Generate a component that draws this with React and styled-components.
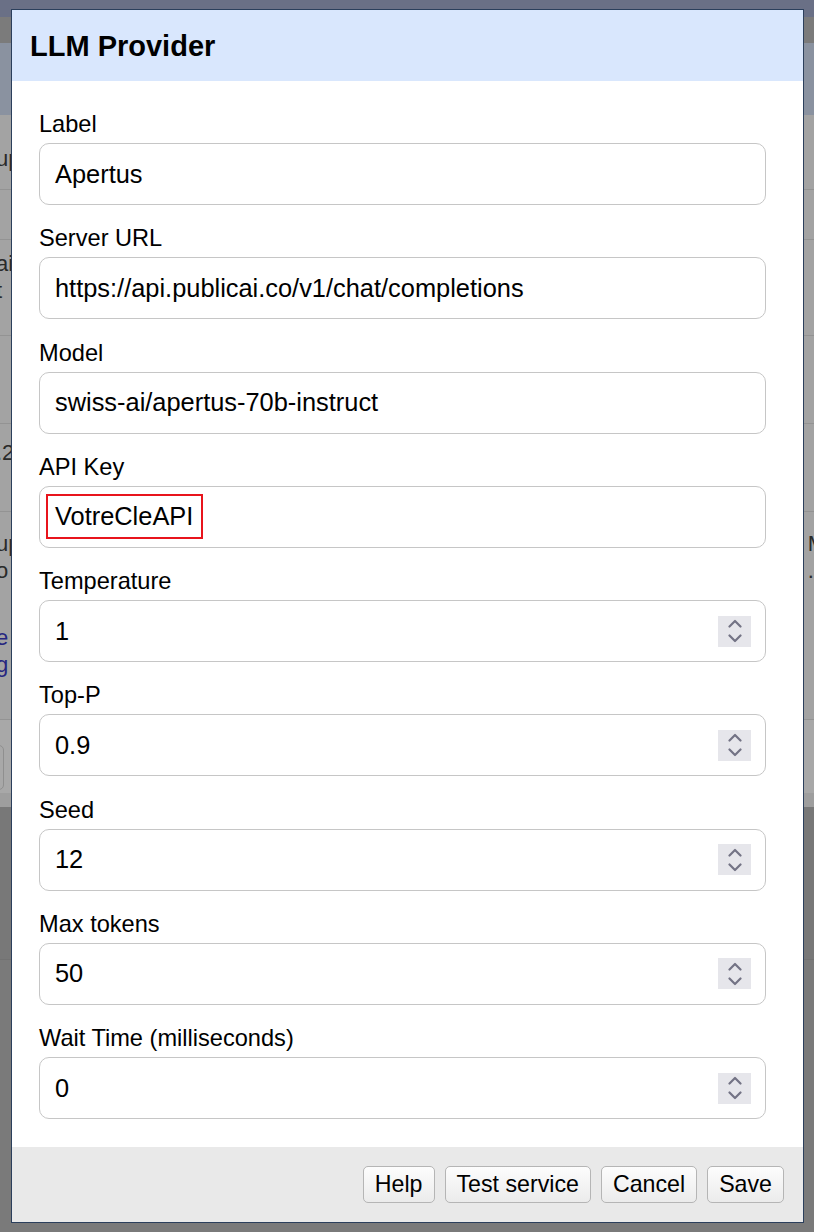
import React from "react";
import styled, { createGlobalStyle } from "styled-components";

const GlobalStyle = createGlobalStyle`
  html, body {
    margin: 0;
    padding: 0;
    background: #7a7a7a;
    font-family: "Liberation Sans", Arial, Helvetica, sans-serif;
    overflow: hidden;
  }
  * { box-sizing: border-box; }
`;

/* ---------- dimmed page behind the modal ---------- */
const Page = styled.div`
  width: 814px;
  height: 1232px;
  display: flex;
  flex-direction: column;
  background: #7a7a7a;
  overflow: hidden;
`;

const TopBar = styled.div`
  height: 17px;
  background: #6a7086;
`;

const TabBar = styled.div`
  height: 26px;
  background: #7b7b7b;
`;

const TableHead = styled.div`
  height: 72px;
  background: #8a92a0;
  display: flex;
  align-items: center;
  font-size: 30px;
  font-weight: bold;
  color: #23262c;
  overflow: hidden;
`;

const HeadFrag = styled.span`
  margin-left: -14px;
  margin-top: 14px;
`;

const Row = styled.div`
  height: ${(p) => p.$h}px;
  background: #a3a3a3;
  border-bottom: 1px solid #939393;
  display: flex;
  justify-content: space-between;
  align-items: flex-start;
  overflow: hidden;
  font-size: 22px;
  color: #2a2a2a;
`;

const Frag = styled.div`
  display: flex;
  flex-direction: column;
  line-height: 27px;
  padding-top: ${(p) => p.$top}px;
  margin-left: ${(p) => (p.$right ? 0 : "-4px")};
  margin-right: ${(p) => (p.$right ? "-12px" : 0)};
  white-space: nowrap;
`;

const LinkText = styled.span`
  color: #262680;
`;

const Spacer = styled.span`
  height: ${(p) => p.$h}px;
`;

const ActionArea = styled.div`
  height: 73px;
  background: #a8a8a8;
  display: flex;
  align-items: flex-end;
  padding-bottom: 3px;
`;

const GhostButton = styled.div`
  width: 60px;
  height: 45px;
  margin-left: -56px;
  border: 1px solid #8f8f8f;
  border-radius: 5px;
`;

const StripBand = styled.div`
  height: 14px;
  background: #9e9e9e;
`;

const LowerArea = styled.div`
  height: 153px;
  background: #787878;
  border-bottom: 1px solid #727272;
`;

/* ---------- modal ---------- */
const Dialog = styled.div`
  position: fixed;
  top: 9px;
  left: 11px;
  width: 793px;
  border: 1px solid #2b3f5c;
  background: #ffffff;
  display: flex;
  flex-direction: column;
`;

const Header = styled.div`
  height: 71px;
  background: #d9e7fd;
  display: flex;
  align-items: center;
  padding-left: 18px;
  padding-top: 2px;
  font-size: 29px;
  font-weight: bold;
  color: #000;
`;

const Body = styled.div`
  padding: 31px 37px 28px 27px;
  display: flex;
  flex-direction: column;
  gap: 21.25px;
`;

const Field = styled.div`
  display: flex;
  flex-direction: column;
  gap: 7px;
`;

const Label = styled.label`
  height: 24px;
  line-height: 24px;
  font-size: 23.6px;
  color: #000;
`;

const InputBox = styled.div`
  height: 62px;
  border: 1px solid #c6c6c6;
  border-radius: 10px;
  display: flex;
  align-items: center;
  padding: 0 14px 0 15px;
  font-size: 25.4px;
  color: #000;
  white-space: nowrap;
`;

const Highlight = styled.span`
  display: inline-block;
  height: 45px;
  line-height: 41px;
  margin-left: -9px;
  padding: 0 8px 0 7px;
  border: 2px solid #e8141c;
`;

const Spinner = styled.div`
  margin-left: auto;
  width: 33px;
  height: 31px;
  background: #e6e6eb;
  display: flex;
  align-items: center;
  justify-content: center;
`;

const Footer = styled.div`
  height: 75px;
  background: #e9e9e9;
  display: flex;
  align-items: center;
  justify-content: flex-end;
  gap: 10px;
  padding: 0 19px 0 0;
`;

const Button = styled.button`
  height: 37px;
  padding: 0 11px;
  border: 1px solid #b5b5b5;
  border-radius: 5px;
  background: linear-gradient(#fdfdfd, #ebebeb);
  font-family: "Liberation Sans", Arial, sans-serif;
  font-size: 23.2px;
  color: #000;
  cursor: pointer;
`;

const SpinIcon = () => (
  <svg width="14" height="24" viewBox="0 0 14 24" fill="none">
    <polyline points="1.5,7.5 7,2 12.5,7.5" stroke="#737385" strokeWidth="2.2" strokeLinecap="round" strokeLinejoin="round" />
    <polyline points="1.5,16.5 7,22 12.5,16.5" stroke="#737385" strokeWidth="2.2" strokeLinecap="round" strokeLinejoin="round" />
  </svg>
);

const fields = [
  { label: "Label", value: "Apertus" },
  { label: "Server URL", value: "https://api.publicai.co/v1/chat/completions" },
  { label: "Model", value: "swiss-ai/apertus-70b-instruct" },
  { label: "API Key", value: "VotreCleAPI", highlight: true },
  { label: "Temperature", value: "1", number: true },
  { label: "Top-P", value: "0.9", number: true },
  { label: "Seed", value: "12", number: true },
  { label: "Max tokens", value: "50", number: true },
  { label: "Wait Time (milliseconds)", value: "0", number: true },
];

const rows = [
  { h: 75, left: ["up"], leftTop: 30, right: ["/"], rightTop: 30 },
  { h: 50 },
  { h: 96, left: ["ai", "t"], leftTop: 10 },
  { h: 88 },
  { h: 88, left: [".2"], leftTop: 15 },
  { h: 208, left: ["up", "o"], leftTop: 18, right: ["M", "."], rightTop: 18, link: ["e", "g"] },
];

export default function App() {
  return (
    <>
      <GlobalStyle />
      <Page>
        <TopBar />
        <TabBar />
        <TableHead>
          <HeadFrag>r</HeadFrag>
        </TableHead>
        {rows.map((r, i) => (
          <Row key={i} $h={r.h}>
            <Frag $top={r.leftTop || 0}>
              {(r.left || []).map((t, j) => (
                <span key={j}>{t}</span>
              ))}
              {r.link && <Spacer $h={40} />}
              {(r.link || []).map((t, j) => (
                <LinkText key={"l" + j}>{t}</LinkText>
              ))}
            </Frag>
            <Frag $right $top={r.rightTop || 0}>
              {(r.right || []).map((t, j) => (
                <span key={j}>{t}</span>
              ))}
            </Frag>
          </Row>
        ))}
        <ActionArea>
          <GhostButton />
        </ActionArea>
        <StripBand />
        <LowerArea />
      </Page>

      <Dialog role="dialog" aria-label="LLM Provider">
        <Header>LLM Provider</Header>
        <Body>
          {fields.map((f) => (
            <Field key={f.label}>
              <Label>{f.label}</Label>
              <InputBox>
                {f.highlight ? <Highlight>{f.value}</Highlight> : <span>{f.value}</span>}
                {f.number && (
                  <Spinner>
                    <SpinIcon />
                  </Spinner>
                )}
              </InputBox>
            </Field>
          ))}
        </Body>
        <Footer>
          <Button>Help</Button>
          <Button>Test service</Button>
          <Button>Cancel</Button>
          <Button>Save</Button>
        </Footer>
      </Dialog>
    </>
  );
}
